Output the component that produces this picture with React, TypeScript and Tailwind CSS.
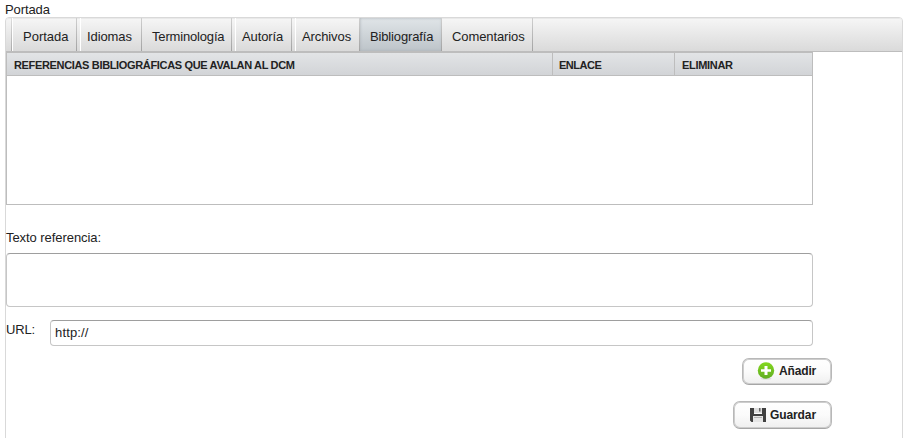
import React from "react";

type Tab = { label: string; width: string; highlight?: string; active?: boolean };

const tabs: Tab[] = [
  { label: "Portada", width: "w-[65px] pl-[11px]", highlight: "left-0" },
  { label: "Idiomas", width: "w-[65px] pl-[10px] tracking-[-0.1px]", highlight: "left-[3px]" },
  { label: "Terminología", width: "w-[90px] pl-[10px] tracking-[-0.17px]" },
  { label: "Autoría", width: "w-[60px] pl-[10px] tracking-[-0.1px]", highlight: "left-[3px]" },
  { label: "Archivos", width: "w-[68px] pl-[10px] tracking-[-0.1px]", highlight: "left-[3px]" },
  { label: "Bibliografía", width: "w-[82px] pl-[10px] tracking-[-0.15px]", active: true },
  { label: "Comentarios", width: "w-[91px] pl-[10px] tracking-[-0.1px]" },
];

const buttonClass =
  "flex items-center rounded-[7px] border border-[#b8b8b8] border-b-[#a6a6a6] bg-linear-to-b from-white via-[#fbfbfb] to-[#efefef] text-[12px] font-bold text-[#222] shadow-[inset_0_0_0_1px_#cdcdcd]";

function AddIcon() {
  return (
    <svg width="18" height="18" viewBox="0 0 18 18" className="shrink-0">
      <defs>
        <linearGradient id="green" x1="0" y1="0" x2="0" y2="1">
          <stop offset="0" stopColor="#83d81d" />
          <stop offset="1" stopColor="#61ac24" />
        </linearGradient>
      </defs>
      <ellipse cx="9" cy="16.600" rx="5.500" ry="1.200" fill="#dedede" />
      <circle cx="9" cy="8.500" r="8.200" fill="url(#green)" />
      <path d="M7.500 4h3v3.200H14v2.600h-3.500V13h-3V9.800H4V7.200h3.500z" fill="#fff" />
    </svg>
  );
}

function SaveIcon() {
  return (
    <svg width="16" height="16" viewBox="0 0 16 16" className="shrink-0">
      <path d="M0 1h4v6h8V1h4v14h-3V9H3v6H1.500L0 13.500z" fill="#414141" />
      <path d="M4 1h8v5H4z" fill="#dedede" />
      <path d="M9 1h1.500v3.500H9z" fill="#666" />
      <path d="M3 9h10v6H3z" fill="#e6e6e6" />
      <path d="M4 10.500h8" stroke="#b4b4b4" />
    </svg>
  );
}

export default function App() {
  return (
    <div className="h-[438px] w-[909px] overflow-hidden bg-white font-['Liberation_Sans',Arial,sans-serif] text-[13px] leading-[16px] text-[#222]">
      <div className="h-[17px] pl-[5px] pt-[2px] tracking-[-0.1px]">Portada</div>
      <main className="ml-[5px] h-[430px] w-[898px] rounded-t-[4px] border border-[#d9d9d9]">
        <nav className="flex h-[34px] rounded-t-[3px] border-b border-[#bdbdbd] bg-linear-to-b from-[#f6f6f6] to-[#dadada] pl-[5px] shadow-[inset_0_1px_0_#e9e9e9]">
          <span className="w-px bg-linear-to-b from-[#ddd] to-[#aaa]" />
          {tabs.map((tab) => (
            <button
              key={tab.label}
              className={`relative flex h-[33px] shrink-0 items-center pt-[5px] text-left whitespace-nowrap ${tab.width} ${
                tab.active
                  ? "bg-linear-to-b from-[#e0e5e8] to-[#bdc4c9] shadow-[inset_0_0_3px_#a9b0b6]"
                  : ""
              }`}
            >
              {tab.highlight && (
                <span className={`absolute top-0 bottom-0 w-px bg-white ${tab.highlight}`} />
              )}
              {tab.label}
              <span className="absolute top-0 right-0 bottom-0 w-px bg-linear-to-b from-[#cfcfcf] to-[#a3a3a3]" />
            </button>
          ))}
        </nav>
        <section className="h-[153px] w-[807px] border border-t-0 border-[#bdbdbd]">
          <div className="flex h-[24px] border-y border-[#bdbdbd] bg-linear-to-b from-[#e2e4e6] to-[#d2d4d7] text-[11px] font-bold leading-[25px]">
            <div className="w-[546px] border-r border-[#bdbdbd] pl-[7px] tracking-[-0.34px]">REFERENCIAS BIBLIOGRÁFICAS QUE AVALAN AL DCM</div>
            <div className="w-[122px] border-r border-[#bdbdbd] pl-[6px] tracking-[-0.5px]">ENLACE</div>
            <div className="flex-1 pl-[7px] tracking-[-0.3px]">ELIMINAR</div>
          </div>
        </section>
        <label className="mt-[25px] block h-[23px] tracking-[-0.06px]">Texto referencia:</label>
        <textarea className="block h-[54px] w-[807px] resize-none rounded-[4px] border border-[#c6c6c6] border-t-[#9e9e9e] outline-none" />
        <div className="mt-[13px] flex h-[26px] w-[807px]">
          <label className="w-[44px] pt-[2px] tracking-[-0.2px]">URL:</label>
          <input
            defaultValue="http://"
            className="h-[26px] flex-1 rounded-[4px] border border-[#c6c6c6] border-t-[#9e9e9e] bg-white px-[4px] pb-[2px] tracking-[0.15px] outline-none"
          />
        </div>
        <div className="mt-[12px] flex w-[826px] flex-col items-end gap-[16px]">
          <button className={`${buttonClass} h-[27px] w-[90px] gap-[4px] pb-[2px] pl-[14px] tracking-[-0.15px]`}>
            <AddIcon />
            Añadir
          </button>
          <button className={`${buttonClass} h-[28px] w-[99px] gap-[4px] pl-[16px] tracking-[-0.1px]`}>
            <SaveIcon />
            Guardar
          </button>
        </div>
      </main>
    </div>
  );
}
